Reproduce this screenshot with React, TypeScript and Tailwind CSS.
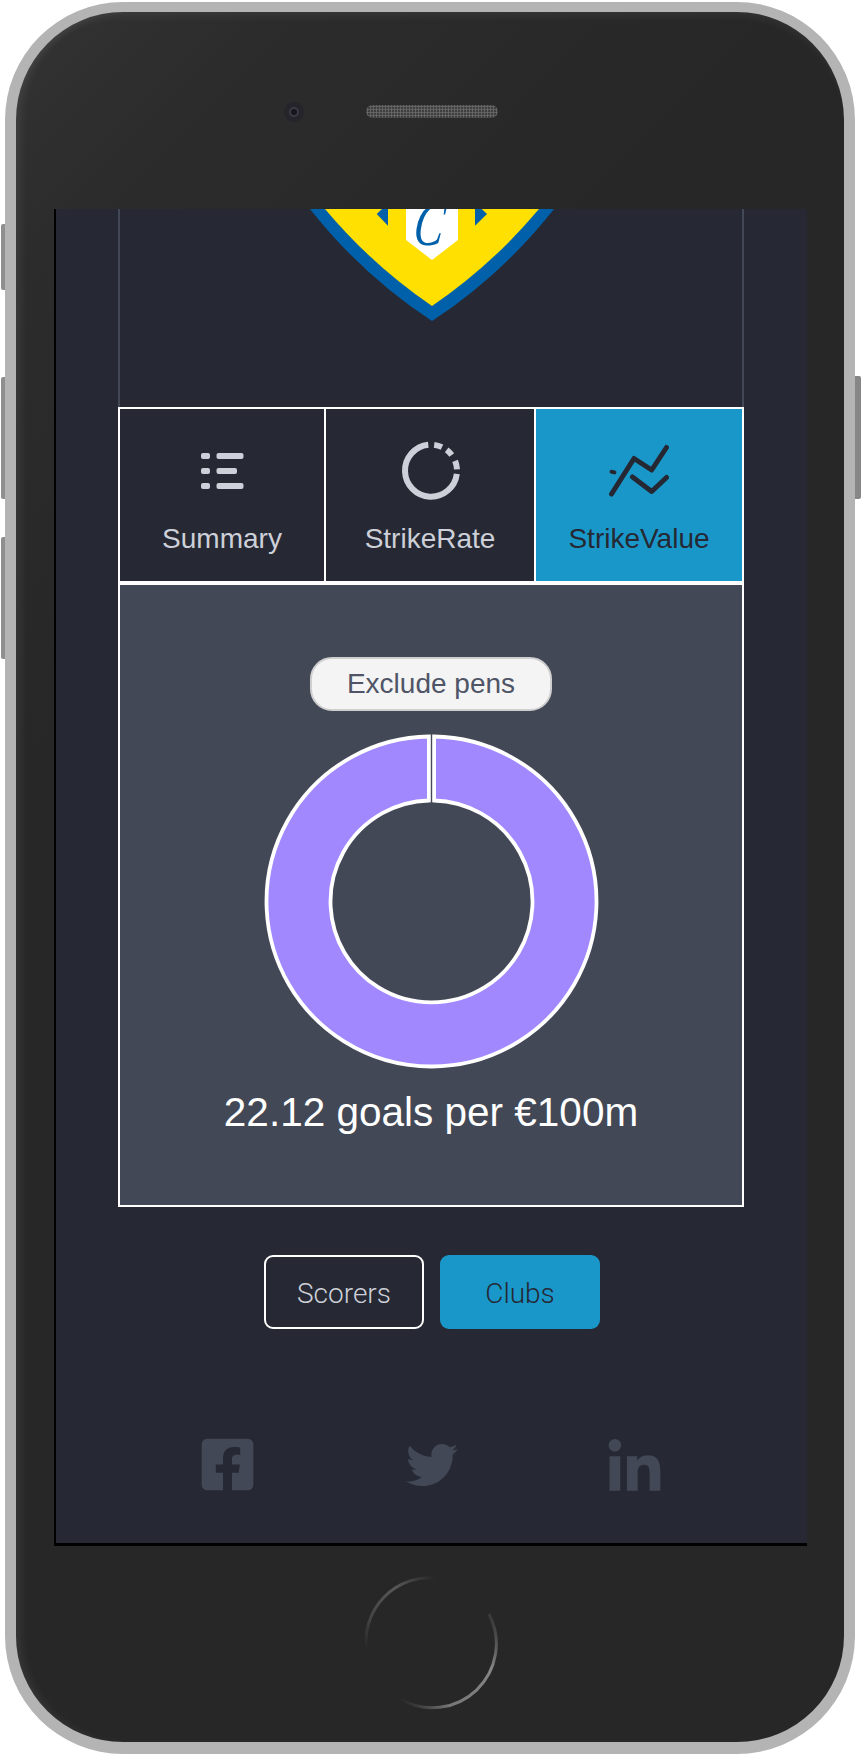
import React from "react";
import { FaFacebookSquare, FaTwitter, FaLinkedinIn } from "react-icons/fa";

const polar = (cx: number, cy: number, r: number, deg: number) => {
  const a = ((deg - 90) * Math.PI) / 180;
  return `${(cx + r * Math.cos(a)).toFixed(2)} ${(cy + r * Math.sin(a)).toFixed(2)}`;
};
const arc = (a: number, b: number) =>
  `M${polar(431, 470.7, 26, a)} A26 26 0 ${b - a > 180 ? 1 : 0} 1 ${polar(431, 470.7, 26, b)}`;

function ListIcon() {
  return (
    <svg viewBox="192 441 60 60" className="w-[60px] h-[60px] block" fill="#cdd0d8">
      <rect x="201" y="453" width="9" height="6" rx="2" />
      <rect x="216.5" y="453" width="27" height="6" rx="2" />
      <rect x="201" y="468" width="9" height="6" rx="2" />
      <rect x="216.5" y="468" width="20.5" height="6" rx="2" />
      <rect x="201" y="483" width="9" height="6" rx="2" />
      <rect x="216.5" y="483" width="27" height="6" rx="2" />
    </svg>
  );
}

function RateIcon() {
  return (
    <svg viewBox="400 441 60 60" className="w-[60px] h-[60px] block" fill="none" stroke="#cdd0d8" strokeWidth="6">
      <path d={arc(97, 354)} />
      <path d={arc(7, 25)} />
      <path d={arc(37, 53)} />
      <path d={arc(68, 87)} />
    </svg>
  );
}

function ValueIcon() {
  return (
    <svg viewBox="609 441 60 60" className="w-[60px] h-[60px] block" fill="none" stroke="#252833" strokeWidth="5" strokeLinecap="round" strokeLinejoin="round">
      <path d="M611.5 494 L634 458.5 L651.7 470 L666.5 447.5" />
      <path d="M632.5 477 L651.7 491.5 L666.5 477.5" />
      <path d="M611.5 471.7 L614.5 472.4" strokeWidth="4" />
    </svg>
  );
}

function Logo() {
  return (
    <svg viewBox="308 209 248 114" className="w-[248px] h-[114px] block ml-[2px]">
      <path d="M310 209 Q362 275 432 321 Q502 275 554 209 Z" fill="#0060aa" />
      <path d="M325 209 Q372 265 432 306 Q492 265 539 209 Z" fill="#ffe000" />
      <path d="M406 209 H458 V240 L432 260 L406 240 Z" fill="#ffffff" />
      <path d="M382 209 H388 V225.7 L376.7 214 Z" fill="#0060aa" />
      <path d="M475 209 H481.7 L487 214 L475 225.7 Z" fill="#0060aa" />
      <text
        transform="translate(412 245) scale(0.72 1) skewX(-10)"
        fontSize="62"
        fontStyle="italic"
        fontFamily="'Liberation Serif', serif"
        fill="#0060aa"
      >
        C
      </text>
    </svg>
  );
}

function Donut() {
  return (
    <svg viewBox="-168.5 -168.5 337 337" className="w-[337px] h-[337px] block">
      <path
        d="M2.6 -165 A165 165 0 1 1 -2.6 -165 L-2.6 -101 A101 101 0 1 0 2.6 -101 Z"
        fill="#a288ff"
        stroke="#ffffff"
        strokeWidth="3.8"
      />
    </svg>
  );
}

function HomeButton() {
  return (
    <svg viewBox="360 1572 140 140" className="w-[140px] h-[140px] block ml-[344px] mt-[26px] blur-[0.6px]" fill="none" strokeWidth="3">
      <defs>
        <linearGradient id="hb1" gradientUnits="userSpaceOnUse" x1="436" y1="1578" x2="366" y2="1650">
          <stop offset="0" stopColor="#5e5e5e" stopOpacity="0" />
          <stop offset="0.35" stopColor="#5e5e5e" stopOpacity="0.9" />
          <stop offset="0.75" stopColor="#505050" stopOpacity="0.7" />
          <stop offset="1" stopColor="#505050" stopOpacity="0" />
        </linearGradient>
        <linearGradient id="hb2" gradientUnits="userSpaceOnUse" x1="488" y1="1612" x2="400" y2="1700">
          <stop offset="0" stopColor="#777777" stopOpacity="0.2" />
          <stop offset="0.3" stopColor="#858585" />
          <stop offset="0.75" stopColor="#777777" />
          <stop offset="1" stopColor="#777777" stopOpacity="0" />
        </linearGradient>
      </defs>
      <path d="M436 1578 A64 64 0 0 0 366.5 1650" stroke="url(#hb1)" />
      <path d="M489 1614 A64 64 0 0 1 400 1699" stroke="url(#hb2)" />
    </svg>
  );
}

function Tab({ w, active, icon, label, divider }: { w: string; active?: boolean; icon: React.ReactNode; label: string; divider?: boolean }) {
  return (
    <div className={`${w} h-full flex flex-col items-center ${active ? "bg-[#1a97c9] text-[#252833]" : "bg-[#262933] text-[#cdd0d8]"} ${divider ? "border-r-2 border-white box-content" : ""}`}>
      <div className="mt-[32px]">{icon}</div>
      <div className="mt-[23px] text-[28px] leading-[30px]">{label}</div>
    </div>
  );
}

export default function App() {
  return (
    <div className="relative w-[861px] h-[1754px] bg-white overflow-hidden font-['Liberation_Sans',sans-serif]">
      <div className="absolute left-[1px] top-[224px] w-[7px] h-[66px] bg-[#8f8f8f] rounded-l-[2px]" />
      <div className="absolute left-[1px] top-[377px] w-[7px] h-[122px] bg-[#8f8f8f] rounded-l-[2px]" />
      <div className="absolute left-[1px] top-[537px] w-[7px] h-[122px] bg-[#8f8f8f] rounded-l-[2px]" />
      <div className="absolute left-[852px] top-[376px] w-[9px] h-[123px] bg-[#868686] rounded-r-[2px]" />

      <div className="relative ml-[5px] mt-[2px] w-[850px] h-[1752px] rounded-[118px] border-x-[11px] border-t-[10px] border-b-[12px] border-[#b4b4b4] bg-[linear-gradient(135deg,#333333_0%,#2c2c2c_10%,#272727_30%,#272727_100%)] shadow-[inset_9px_0_9px_-4px_rgba(255,255,255,0.07),inset_0_9px_8px_-5px_rgba(255,255,255,0.06)]">
        <div className="flex items-center pl-[268px] pt-[93px] h-[197px] items-start">
          <div className="w-[20px] h-[20px] -mt-[3px] rounded-full bg-[#24242a] flex items-center justify-center shrink-0">
            <div className="w-[10px] h-[10px] rounded-full bg-[#15151b] border-2 border-[#3a3a44] shrink-0" />
          </div>
          <div className="ml-[62px] w-[132px] h-[13px] rounded-full bg-[radial-gradient(circle,#6a6a6a_40%,#3a3a3a_70%)] bg-[length:3px_3px] shrink-0" />
        </div>

        <div className="ml-[38px] w-[753px] h-[1337px] border-l-2 border-b-[3px] border-black bg-[#262933] overflow-hidden">
          <div className="w-[626px] ml-[62px] h-[198px] border-x-2 border-[#434856] flex justify-center">
            <Logo />
          </div>

          <div className="w-[626px] ml-[62px] border-2 border-white flex flex-col">
            <div className="h-[176px] border-b-4 border-white flex">
              <Tab w="w-[204px]" icon={<ListIcon />} label="Summary" divider />
              <Tab w="w-[208px]" icon={<RateIcon />} label="StrikeRate" divider />
              <Tab w="w-[206px]" icon={<ValueIcon />} label="StrikeValue" active />
            </div>
            <div className="h-[620px] bg-[#434856] flex flex-col items-center pt-[72px]">
              <div className="w-[242px] h-[54px] rounded-[22px] bg-[#f4f4f4] border-2 border-[#cfcfcf] flex items-center justify-center text-[28px] text-[#4f5566]">
                Exclude pens
              </div>
              <div className="mt-[22px]">
                <Donut />
              </div>
              <div className="mt-[19px] text-[40.5px] leading-[46px] text-white">22.12 goals per €100m</div>
            </div>
          </div>

          <div className="w-[626px] ml-[62px] mt-[48px] flex justify-center gap-[16px] pl-[2px] font-['Roboto',sans-serif] font-light text-[28px]">
            <div className="w-[160px] h-[74px] pt-[3px] rounded-[9px] border-2 border-white flex items-center justify-center text-[#cdd0d8]">
              Scorers
            </div>
            <div className="w-[160px] h-[74px] pt-[3px] rounded-[9px] bg-[#1a97c9] flex items-center justify-center text-[#252833]">
              Clubs
            </div>
          </div>

          <div className="w-[610px] ml-[70px] mt-[106px] grid grid-cols-3 text-[#434856]">
            <div className="flex justify-center items-center h-[59px]">
              <FaFacebookSquare size={59} />
            </div>
            <div className="flex justify-center items-center h-[59px] pl-[2px]">
              <FaTwitter size={52} />
            </div>
            <div className="flex justify-center items-center h-[59px] pt-[7px]">
              <FaLinkedinIn size={59} />
            </div>
          </div>
        </div>

        <HomeButton />
      </div>
    </div>
  );
}
